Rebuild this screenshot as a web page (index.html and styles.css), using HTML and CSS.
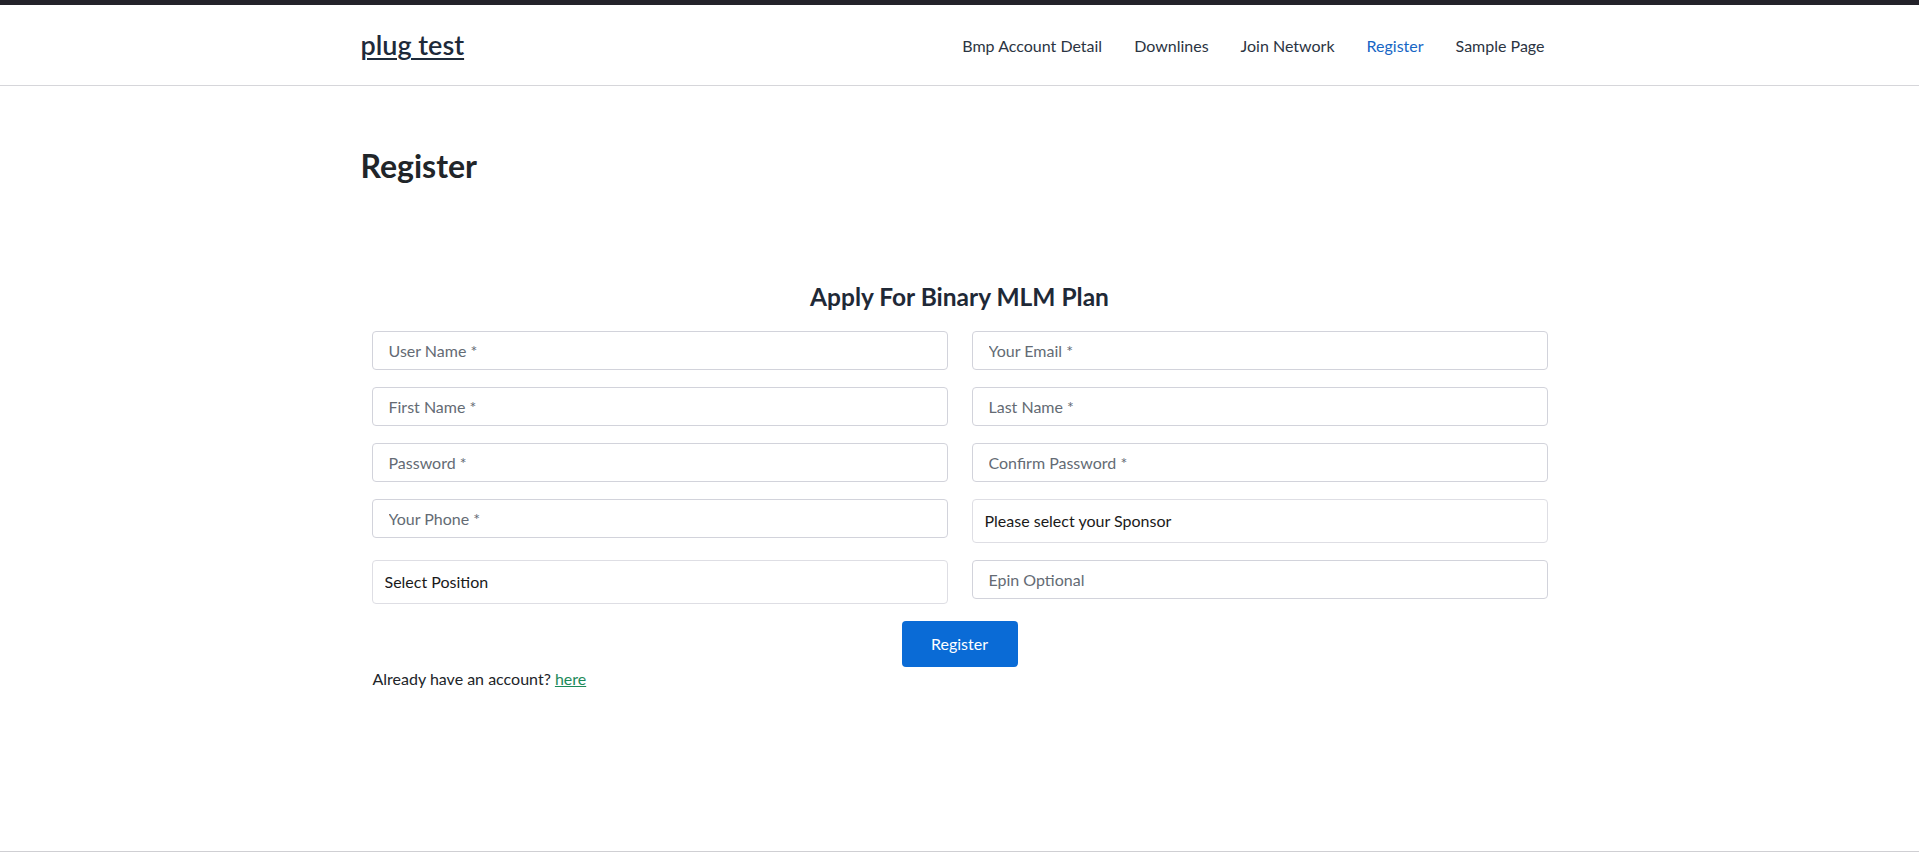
FILE: index.html
```html
<!DOCTYPE html>
<html lang="en">
<head>
<meta charset="utf-8">
<title>Register – plug test</title>
<link rel="stylesheet" href="styles.css">
</head>
<body>
<div class="topbar"></div>
<header class="site-header">
  <div class="container header-inner">
    <a class="logo" href="#">plug test</a>
    <nav class="main-nav">
      <a href="#">Bmp Account Detail</a>
      <a href="#">Downlines</a>
      <a href="#">Join Network</a>
      <a href="#" class="active">Register</a>
      <a href="#">Sample Page</a>
    </nav>
  </div>
</header>
<main class="site-main">
  <div class="container">
    <h1 class="page-title">Register</h1>
    <form class="reg-form">
      <h3 class="form-title">Apply For Binary MLM Plan</h3>
      <div class="form-grid">
        <input class="field" type="text" placeholder="User Name *">
        <input class="field" type="email" placeholder="Your Email *">
        <input class="field" type="text" placeholder="First Name *">
        <input class="field" type="text" placeholder="Last Name *">
        <input class="field" type="password" placeholder="Password *">
        <input class="field" type="password" placeholder="Confirm Password *">
        <input class="field" type="text" placeholder="Your Phone *">
        <select class="field select"><option>Please select your Sponsor</option></select>
        <select class="field select"><option>Select Position</option></select>
        <input class="field" type="text" placeholder="Epin Optional">
      </div>
      <div class="actions">
        <button type="button" class="btn">Register</button>
      </div>
      <p class="login-note">Already have an account? <a href="#">here</a></p>
    </form>
  </div>
</main>
<footer class="site-footer"></footer>
</body>
</html>
```
FILE: styles.css
```css
* { box-sizing: border-box; }
html, body { margin: 0; padding: 0; background: #fff; }
body {
  font-family: "Lato", "Open Sans", sans-serif;
  font-size: 16px;
  line-height: 1.5;
  color: #212529;
}
.topbar { height: 5px; background: #23222a; }
.container { width: 1200px; margin: 0 auto; }
.site-header { height: 81px; border-bottom: 1px solid #d6d6da; }
.header-inner {
  height: 80px;
  display: flex;
  align-items: center;
  justify-content: space-between;
}
.logo {
  margin-left: 1px;
  font-size: 27px;
  font-weight: 600;
  color: #1e2a3a;
  text-decoration: underline;
  text-underline-offset: 3px;
  text-decoration-thickness: 2px;
}
.main-nav { display: flex; gap: 32px; margin-right: 15px; margin-top: 2px; }
.main-nav a { color: #2b3442; text-decoration: none; font-size: 16px; }
.main-nav a.active { color: #1666c5; }
.site-main { min-height: 765px; padding-top: 60px; }
.page-title {
  margin: 0 0 0 1px;
  font-size: 32px;
  font-weight: 700;
  line-height: 1.25;
  color: #212529;
}
.reg-form { padding: 0 12px; }
.form-title {
  margin: 95.5px 0 20px;
  text-align: center;
  font-size: 24.5px;
  font-weight: 700;
  line-height: 1.2;
  color: #1f2937;
}
.form-grid {
  display: grid;
  grid-template-columns: 1fr 1fr;
  column-gap: 24px;
  row-gap: 17px;
  align-items: start;
}
.field {
  display: block;
  width: 100%;
  height: 39px;
  padding: 0 16px;
  border: 1px solid #d2d3db;
  border-radius: 4px;
  background: #fff;
  font: inherit;
  font-size: 16px;
  color: #212529;
  outline: none;
}
.field::placeholder { color: #646b74; opacity: 1; }
.select {
  height: 44px;
  padding: 0 12px;
  -webkit-appearance: none;
  appearance: none;
  border-color: #dedee4;
  color: #1a1a1a;
}
.actions { display: flex; justify-content: center; margin-top: 17px; }
.btn {
  width: 116px;
  height: 46px;
  border: 0;
  border-radius: 4px;
  background: #0a6bd6;
  color: #fff;
  font: inherit;
  font-size: 16px;
}
.login-note { margin: 0 0 0 1px; font-size: 16px; color: #212529; }
.login-note a { color: #1d8a5a; text-decoration: underline; }
.site-footer { height: 2px; border-top: 1px solid #cfcfd3; }
```
